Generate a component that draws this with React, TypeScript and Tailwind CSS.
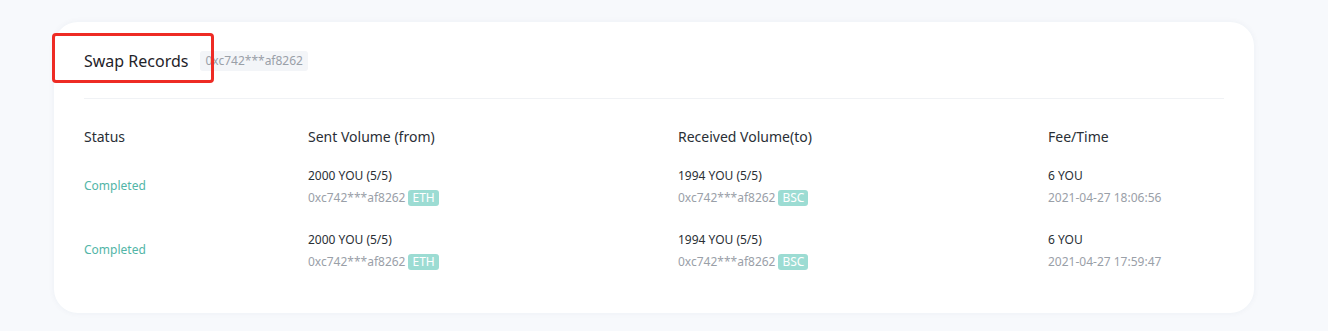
const rows = [
  { time: '2021-04-27 18:06:56' },
  { time: '2021-04-27 17:59:47' },
];

function Badge({ label }: { label: string }) {
  return (
    <span className="ml-[3px] inline-flex h-[16px] items-center rounded-[3px] bg-[#9cdcd3] px-[4px] text-[12px] leading-none text-white">
      {label}
    </span>
  );
}

export default function App() {
  return (
    <div
      className="min-h-[331px] w-full bg-[#f7f9fc] px-[54px] pt-[22px]"
      style={{ fontFamily: '"Noto Sans", "Liberation Sans", sans-serif' }}
    >
      <div className="relative w-[1200px] rounded-[24px] bg-white px-[30px] pb-[30px] shadow-[0_0_6px_rgba(30,50,90,0.05)]">
        {/* red highlight box */}
        <div className="absolute left-[-2px] top-[11px] h-[50px] w-[162px] rounded-[4px] border-[3px] border-[#ee2b24]" />

        <div className="flex h-[77px] items-center gap-[12px] border-b border-[#f0f2f5] pt-[2px]">
          <span className="text-[16px] text-[#1f2329]">Swap Records</span>
          <span className="rounded-[3px] bg-[#f3f5f8] px-[5px] py-[1px] text-[12px] text-[#9aa0a8]">
            0xc742***af8262
          </span>
        </div>

        <div className="grid grid-cols-[224px_370px_370px_1fr] pt-[27px] text-[14px] text-[#2a2f36]">
          <div>Status</div>
          <div>Sent Volume (from)</div>
          <div>Received Volume(to)</div>
          <div>Fee/Time</div>
        </div>

        <div className="pt-[8px]">
          {rows.map((r, i) => (
            <div
              key={i}
              className="grid h-[64px] grid-cols-[224px_370px_370px_1fr] items-center text-[12px]"
            >
              <div className="pb-[3px] text-[#52b5a7]">Completed</div>
              <div className="flex flex-col gap-[4px]">
                <span className="text-[#2a2f36]">2000 YOU (5/5)</span>
                <span className="flex items-center text-[#9aa0a8]">
                  0xc742***af8262
                  <Badge label="ETH" />
                </span>
              </div>
              <div className="flex flex-col gap-[4px]">
                <span className="text-[#2a2f36]">1994 YOU (5/5)</span>
                <span className="flex items-center text-[#9aa0a8]">
                  0xc742***af8262
                  <Badge label="BSC" />
                </span>
              </div>
              <div className="flex flex-col gap-[4px]">
                <span className="text-[#2a2f36]">6 YOU</span>
                <span className="text-[#9aa0a8]">{r.time}</span>
              </div>
            </div>
          ))}
        </div>
      </div>
    </div>
  );
}
